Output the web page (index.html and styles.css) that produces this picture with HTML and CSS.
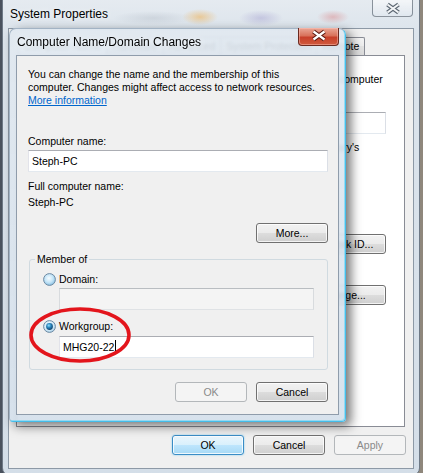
FILE: index.html
```html
<!DOCTYPE html>
<html lang="en">
<head>
<meta charset="utf-8">
<title>System Properties</title>
<link rel="stylesheet" href="styles.css">
</head>
<body>
<div class="desktop">

  <div class="window sysprops">
    <div class="titlebar">
      <span class="title">System Properties</span>
      <span class="close close-inactive">
        <svg width="41" height="17" viewBox="0 0 41 17"><path d="M15.5 4.5 L26.5 12.5 M26.5 4.5 L15.5 12.5" stroke="#5d6873" stroke-width="4.2" fill="none"/><path d="M15.5 4.5 L26.5 12.5 M26.5 4.5 L15.5 12.5" stroke="#f3f5f7" stroke-width="2" fill="none"/></svg>
      </span>
    </div>
    <div class="client">
      <div class="tabs">
        <span class="tab tab-active">Computer Name</span>
        <span class="tab">Hardware</span>
        <span class="tab">Advanced</span>
        <span class="tab">System Protection</span>
        <span class="tab">Remote</span>
      </div>
      <div class="tabpanel">
        <p class="intro">Windows uses the following information to identify your computer<br>on the network.</p>
        <div class="desc-row">
          <span class="row-label">Computer description:</span>
          <span class="textbox textbox-small"></span>
        </div>
        <p class="hint">For example: "Kitchen Computer" or "Mary's<br>Computer".</p>
        <div class="info-row"><span class="row-label">Full computer name:</span><span>Steph-PC</span></div>
        <div class="info-row"><span class="row-label">Workgroup:</span><span>WORKGROUP</span></div>
        <div class="action-row action-first">
          <p>To use a wizard to join a domain or workgroup, click Network ID.</p>
          <button class="btn btn-wide">Network ID...</button>
        </div>
        <div class="action-row action-second">
          <p>To rename this computer or change its domain or workgroup, click Change.</p>
          <button class="btn btn-wide">Change...</button>
        </div>
      </div>
      <div class="footer">
        <button class="btn btn-default">OK</button>
        <button class="btn">Cancel</button>
        <button class="btn" disabled>Apply</button>
      </div>
    </div>
  </div>

  <div class="window dialog">
    <div class="dlg-titlebar">
      <span class="title">Computer Name/Domain Changes</span>
      <span class="close close-red">
        <svg width="41" height="18" viewBox="0 0 41 18"><path d="M15.5 4.5 L26.5 12.5 M26.5 4.5 L15.5 12.5" stroke="#5a1a12" stroke-width="4.4" fill="none"/><path d="M15.5 4.5 L26.5 12.5 M26.5 4.5 L15.5 12.5" stroke="#ffffff" stroke-width="2.2" fill="none"/></svg>
      </span>
    </div>
    <div class="dlg-client">
      <p class="lead">You can change the name and the membership of this<br>computer. Changes might affect access to network resources.<br><a class="link" href="#">More information</a></p>

      <div class="field-label label-first">Computer name:</div>
      <div class="textbox">Steph-PC</div>

      <div class="field-label label-full">Full computer name:</div>
      <div class="field-value">Steph-PC</div>

      <div class="more-row"><button class="btn">More...</button></div>

      <fieldset class="member">
        <legend>Member of</legend>
        <div class="radio-row">
          <svg class="radio" width="13" height="13" viewBox="0 0 13 13"><defs><radialGradient id="rg1" cx="45%" cy="40%" r="65%"><stop offset="0" stop-color="#f6fcff"/><stop offset="0.55" stop-color="#c3e4f7"/><stop offset="1" stop-color="#7db8dd"/></radialGradient></defs><circle cx="6.5" cy="6.5" r="5.9" fill="url(#rg1)" stroke="#6f8aa2" stroke-width="1"/></svg>
          <span>Domain:</span>
        </div>
        <div class="textbox textbox-disabled radio-input"></div>
        <div class="radio-row radio-row-second">
          <svg class="radio" width="13" height="13" viewBox="0 0 13 13"><defs><radialGradient id="rg2" cx="45%" cy="40%" r="65%"><stop offset="0" stop-color="#f6fcff"/><stop offset="0.6" stop-color="#d4ebf8"/><stop offset="1" stop-color="#9cc7e3"/></radialGradient><radialGradient id="dot" cx="40%" cy="35%" r="70%"><stop offset="0" stop-color="#8fe0ff"/><stop offset="0.45" stop-color="#2a86bd"/><stop offset="1" stop-color="#0b3b63"/></radialGradient></defs><circle cx="6.5" cy="6.5" r="5.9" fill="url(#rg2)" stroke="#6f8aa2" stroke-width="1"/><circle cx="6.5" cy="6.5" r="3.4" fill="url(#dot)"/></svg>
          <span>Workgroup:</span>
        </div>
        <div class="textbox radio-input radio-input-second">MHG20-22<span class="caret"></span></div>
      </fieldset>

      <div class="button-row">
        <button class="btn" disabled>OK</button>
        <button class="btn">Cancel</button>
      </div>

      <svg class="annotation" width="102" height="56" viewBox="0 0 102 56"><ellipse cx="51" cy="28" rx="49" ry="26" fill="none" stroke="#e3151c" stroke-width="3.6"/></svg>
    </div>
  </div>

</div>
</body>
</html>
```

FILE: styles.css
```css
* {
  box-sizing: border-box;
}

html,
body {
  margin: 0;
  padding: 0;
}

body {
  width: 423px;
  height: 473px;
  overflow: hidden;
  font-family: "Liberation Sans", Arial, sans-serif;
  font-size: 10.5px;
  line-height: 13px;
  color: #000;
}

.desktop {
  position: relative;
  width: 423px;
  height: 473px;
  overflow: hidden;
  background: linear-gradient(90deg, #4a525e 0, #4a525e 3px, #8f877c 100%);
}

.window {
  position: absolute;
}

p {
  margin: 0;
}

/* ---------- outer window ---------- */

.sysprops {
  left: 2px;
  top: -8px;
  width: 418px;
  height: 484px;
  display: flex;
  flex-direction: column;
  padding: 0 5px 6px;
  border: 1px solid #6e7986;
  border-radius: 8px;
  background:
    radial-gradient(18px 8px at 197px 24px, rgba(238, 175, 80, 0.55), rgba(238, 175, 80, 0)),
    radial-gradient(22px 8px at 258px 25px, rgba(130, 120, 190, 0.3), rgba(130, 120, 190, 0)),
    radial-gradient(16px 7px at 330px 24px, rgba(215, 95, 95, 0.35), rgba(215, 95, 95, 0)),
    radial-gradient(40px 7px at 150px 25px, rgba(120, 130, 145, 0.18), rgba(120, 130, 145, 0)),
    linear-gradient(#e7ecf1, #dce4ec 40px, #d4dee8);
}

.titlebar {
  height: 35px;
  flex: none;
  display: flex;
  align-items: flex-start;
  padding-top: 7px;
}

.title {
  font-size: 12px;
  line-height: 28px;
  padding-left: 2px;
  color: #000;
  text-shadow: 0 0 6px rgba(255, 255, 255, 0.9);
}

.close {
  margin-left: auto;
  display: block;
  width: 41px;
}

.close svg {
  display: block;
}

.close-inactive {
  height: 17px;
  margin-right: 1px;
  border: 1px solid rgba(70, 82, 96, 0.6);
  border-top: none;
  border-radius: 0 0 4px 4px;
  background: linear-gradient(rgba(255, 255, 255, 0.55), rgba(225, 232, 240, 0.4));
}

.close-inactive svg {
  margin-left: -1px;
}

.client {
  flex: 1;
  display: flex;
  flex-direction: column;
  background: #f0f0f0;
  border: 1px solid #8d99a6;
  padding: 8px 8px 12px 7px;
}

.tabs {
  display: flex;
  height: 18px;
  padding-left: 2px;
}

.tab {
  height: 18px;
  padding: 0 5px;
  margin-right: -1px;
  line-height: 17px;
  border: 1px solid #898c95;
  border-bottom: none;
  border-radius: 2px 2px 0 0;
  background: linear-gradient(#f4f4f4, #ececec 50%, #e2e2e2 50%, #dadada);
}

.tab-active {
  background: #fff;
}

.tabpanel {
  height: 372px;
  background: #fff;
  border: 1px solid #898c95;
  padding: 17px 18px 0 12px;
}

.intro {
  margin-left: 52px;
  white-space: nowrap;
}

.desc-row {
  display: flex;
  align-items: center;
  margin-top: 13px;
}

.row-label {
  width: 140px;
  flex: none;
}

.textbox-small {
  flex: 1;
  height: 19px;
}

.hint {
  margin: 7px 0 0 125px;
  white-space: nowrap;
}

.info-row {
  display: flex;
  margin-top: 14px;
}

.info-row + .info-row {
  margin-top: 6px;
}

.action-row {
  display: flex;
  align-items: center;
  gap: 12px;
}

.action-row p {
  flex: 1;
}

.action-first {
  margin-top: 18px;
}

.action-second {
  margin-top: 25px;
}

.footer {
  display: flex;
  justify-content: flex-end;
  gap: 9px;
  margin-top: 8px;
  margin-right: -1px;
}

/* ---------- buttons ---------- */

.btn {
  width: 72px;
  height: 20px;
  padding: 0;
  font: inherit;
  color: #000;
  border: 1px solid #707070;
  border-radius: 3px;
  background: linear-gradient(#f2f2f2, #ebebeb 49%, #dddddd 50%, #cfcfcf);
  box-shadow: inset 0 0 0 1px rgba(255, 255, 255, 0.75);
}

.btn-wide {
  width: 86px;
  flex: none;
}

.btn-default {
  border-color: #3a8dc6;
  background: linear-gradient(#eaf6fd, #d9f0fc 49%, #bee6fd 50%, #a7d9f5);
  box-shadow: inset 0 0 0 1px rgba(255, 255, 255, 0.8), 0 0 2px rgba(80, 190, 240, 0.7);
}

.btn:disabled {
  color: #8a8a8a;
  border-color: #b3b7ba;
  background: #f4f4f4;
  box-shadow: none;
}

/* ---------- inner dialog ---------- */

.dialog {
  left: 9px;
  top: 28px;
  width: 337px;
  padding: 0 6px 6px;
  border: 1px solid;
  border-color: #a2b3c4 #44bdea #44bdea #a2b3c4;
  border-radius: 7px 7px 4px 4px;
  background: linear-gradient(rgba(224, 232, 240, 0.92), rgba(210, 222, 234, 0.88));
  -webkit-backdrop-filter: blur(1.5px);
  backdrop-filter: blur(1.5px);
  box-shadow: inset -1px -1px 0 rgba(120, 215, 245, 0.7), 5px 4px 11px rgba(0, 0, 0, 0.55);
}

.dlg-titlebar {
  height: 26px;
  display: flex;
  align-items: center;
}

.dlg-titlebar .title {
  line-height: 26px;
  padding-left: 1px;
}

.close-red {
  align-self: flex-start;
  margin-top: -1px;
  height: 18px;
  border: 1px solid #6b2a20;
  border-top: none;
  border-radius: 0 0 4px 4px;
  background: linear-gradient(#eaa796, #d9725b 45%, #c8402a 55%, #cf5a3e);
  box-shadow: inset 0 0 0 1px rgba(255, 200, 190, 0.45);
}

.close-red svg {
  margin-left: -1px;
  margin-top: -1px;
}

.dlg-client {
  position: relative;
  background: #f0f0f0;
  border: 1px solid #8f9cab;
  padding: 12px 10px 12px 11px;
}

.link {
  color: #0066cc;
  text-decoration: underline;
}

.field-label {
  margin-bottom: 2px;
}

.label-first {
  margin-top: 28px;
}

.label-full {
  margin-top: 8px;
  margin-bottom: 3px;
}

.textbox {
  display: block;
  height: 22px;
  padding: 0 3px;
  line-height: 20px;
  background: #fff;
  border: 1px solid;
  border-color: #abadb3 #dbdfe6 #e3e9ef #e2e3ea;
  white-space: nowrap;
}

.textbox-disabled {
  background: #f4f4f4;
  border-color: #b9bdc1 #d8dbde #dfe2e5 #d8dbde;
}

.more-row {
  display: flex;
  justify-content: flex-end;
  margin-top: 14px;
}

.member {
  margin: 10px 0 0 1px;
  padding: 7px 13px 11px 5px;
  border: 1px solid #d0dae0;
  border-radius: 3px;
  min-width: 0;
}

.member legend {
  padding: 0 2px;
  line-height: 13px;
}

.radio-row {
  display: flex;
  align-items: center;
  gap: 3px;
  height: 13px;
  margin-left: 8px;
}

.radio {
  display: block;
  flex: none;
}

.radio-row-second {
  margin-top: 10px;
}

.radio-input {
  margin: 2px 0 0 24px;
}

.radio-input-second {
  margin-top: 3px;
}

.caret {
  display: inline-block;
  width: 1px;
  height: 14px;
  margin-left: 1px;
  vertical-align: -3px;
  background: #000;
}

.button-row {
  display: flex;
  justify-content: flex-end;
  gap: 9px;
  margin-top: 12px;
}

.annotation {
  position: absolute;
  left: 12px;
  top: 251px;
  display: block;
}
```
